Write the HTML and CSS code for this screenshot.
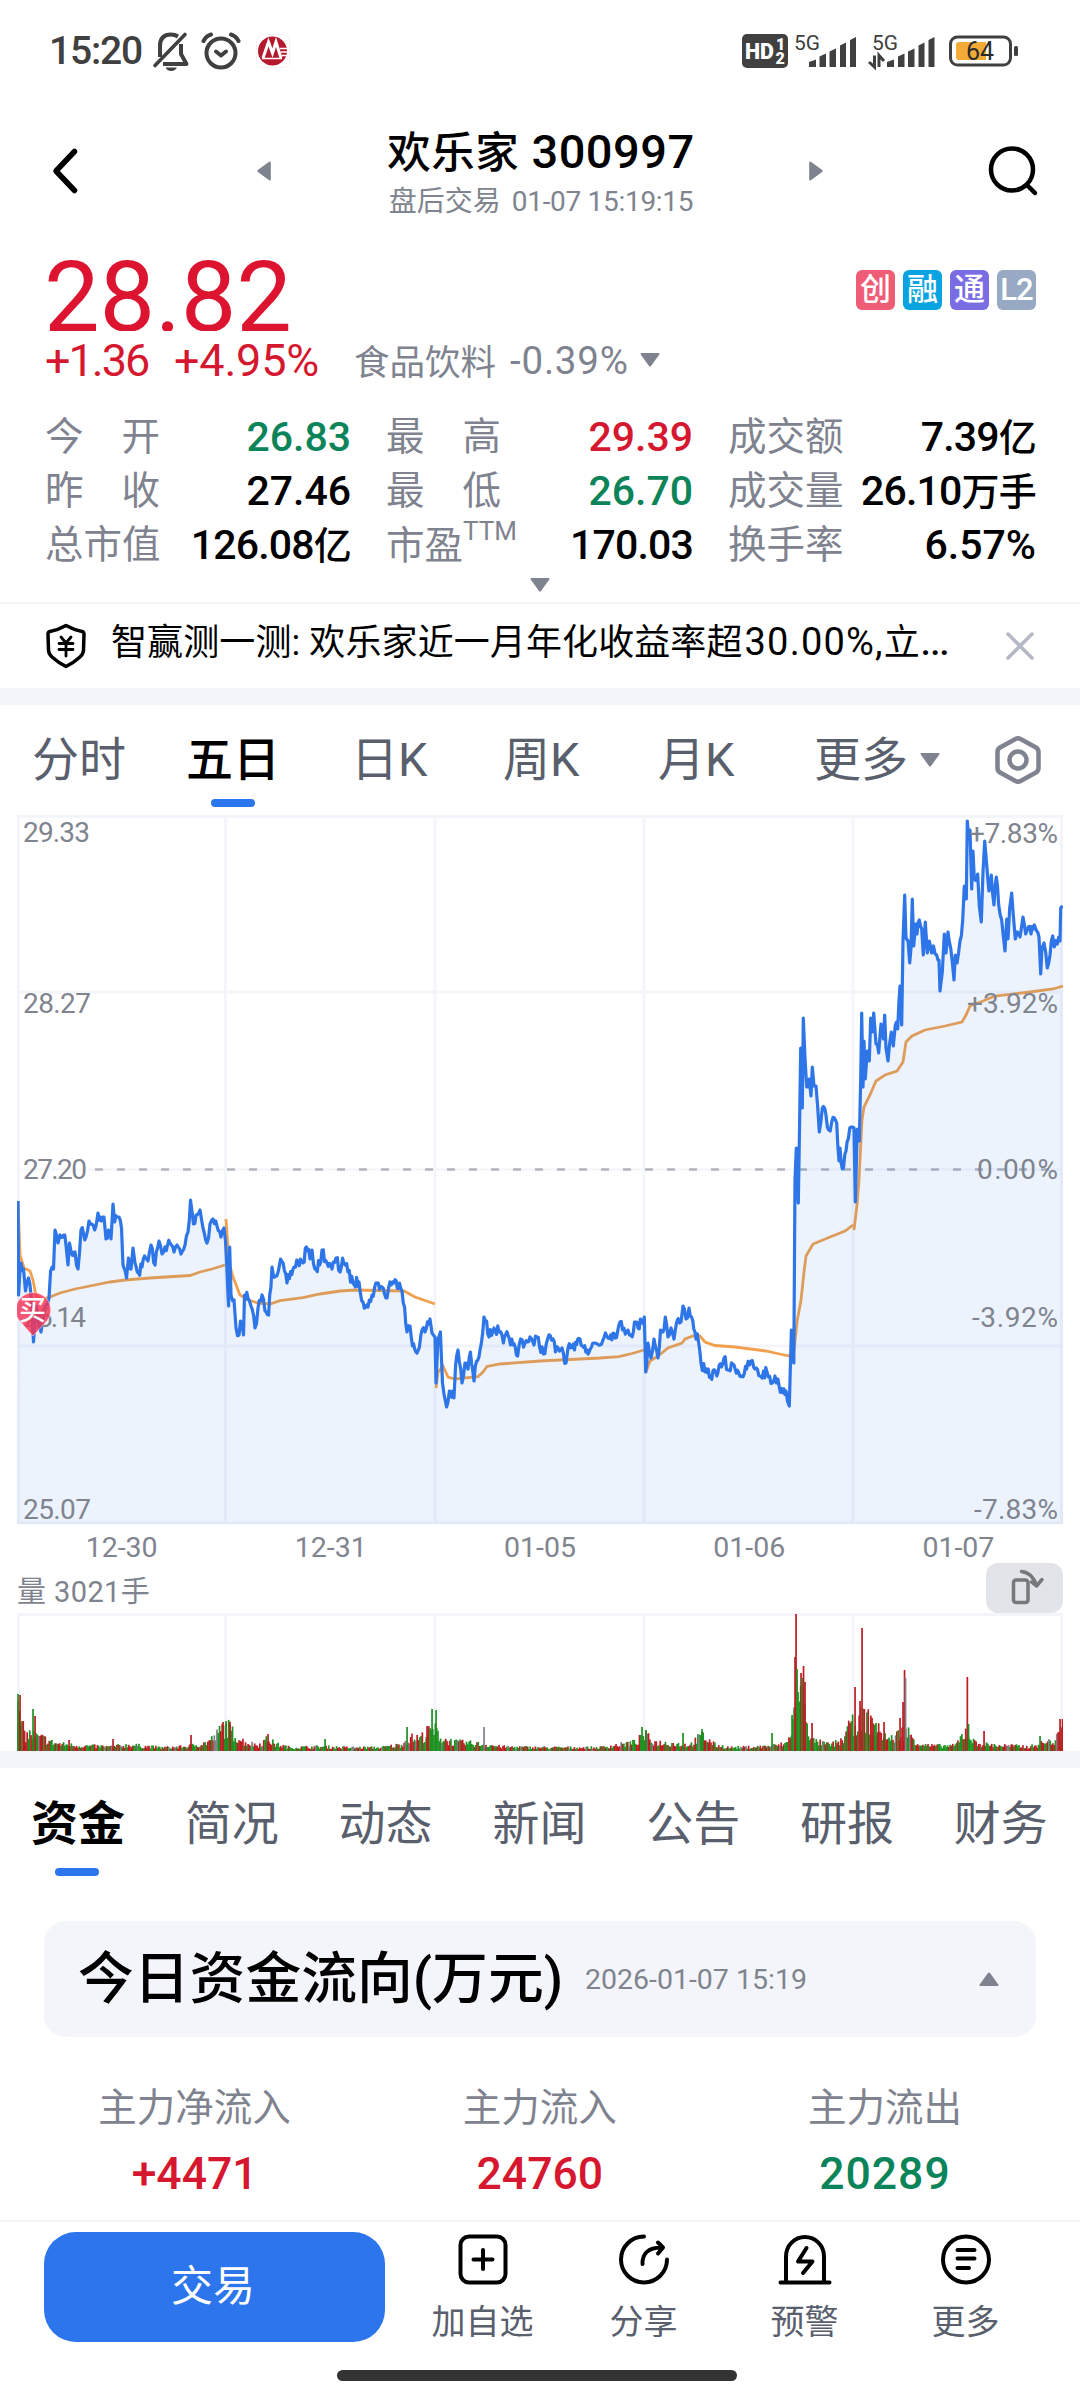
FILE: index.html
```html
<!DOCTYPE html>
<html lang="zh-CN">
<head>
  <meta charset="UTF-8" />
  <meta name="viewport" content="width=device-width, initial-scale=1.0"/>
  <title>欢乐家 300997</title>
  <link rel="stylesheet" href="styles.css">
</head>
<body>

  <!-- Status bar -->
  <div class="status">
    <span class="clock">15:20</span>
    <svg class="st-bell" width="38" height="40" viewBox="0 0 38 40" fill="none" stroke="#404040" stroke-width="4">
      <path d="M8 26 V15 Q8 3.500 19 3.500 Q23 3.500 26 5.500"/>
      <path d="M29 13 V23 L34.500 33 H11" stroke-linejoin="round"/>
      <path d="M3 34.500 L33 3.500" stroke-linecap="round" stroke-width="3.600"/>
      <path d="M13.500 36.500 H25 Q23 40 19 40 Q15.500 40 13.500 36.500Z" fill="#404040" stroke="none"/>
    </svg>
    <svg class="st-alarm" width="40" height="40" viewBox="0 0 40 40" fill="none" stroke="#404040" stroke-width="4" stroke-linecap="round" stroke-linejoin="round">
      <circle cx="20" cy="22" r="14.500"/>
      <path d="M15 20.500 L20 24.500 L25 20.500"/>
      <path d="M2.500 10 Q5 5 10 3.500 M37.500 10 Q35 5 30 3.500"/>
    </svg>
    <svg class="st-bank" width="34" height="34" viewBox="0 0 34 34">
      <rect x="0.500" y="0.500" width="33" height="33" rx="6" fill="#fff" stroke="#f3f1f1"/>
      <circle cx="16.500" cy="17" r="14.500" fill="#b5192e"/>
      <path d="M7 24 L12.500 8 L16.500 19 L20 8 L25 24" fill="none" stroke="#fff" stroke-width="3"/>
      <path d="M6 24.500 H26 M24 14.500 H33 M25 18 H33 M26 21.500 H33" stroke="#fff" stroke-width="1.700"/>
    </svg>

    <div class="st-right">
      <svg width="46" height="34" viewBox="0 0 46 34">
        <rect width="46" height="34" rx="5" fill="#404040"/>
        <text x="3" y="24.500" class="hd" textLength="29" lengthAdjust="spacingAndGlyphs">HD</text>
        <text x="34" y="16" class="hd-sub">1</text>
        <text x="33.500" y="30" class="hd-sub">2</text>
      </svg>
      <svg class="sig" width="64" height="40" viewBox="0 -4 64 40">
        <text x="0" y="14.500" class="g5" textLength="26" lengthAdjust="spacingAndGlyphs">5G</text>
        <path class="bars" d="M15 32V27L22 24.500V32Z M25.500 32V21.500L32 18.500V32Z M35.500 32V16.500L42 13.500V32Z M46 32V10.500L52 7.500V32Z M56 32V5L62 2V32Z"/>
      </svg>
      <svg class="sig two" width="70" height="40" viewBox="0 -4 70 40">
        <text x="4" y="14.500" class="g5" textLength="26" lengthAdjust="spacingAndGlyphs">5G</text>
        <path d="M6.500 20.500 V32 L1 27 M11 32 V20.500 L16 26" fill="none" stroke="#404040" stroke-width="3"/>
        <path class="bars" d="M19 32V27L26 24.500V32Z M30 32V21.500L36.500 18.500V32Z M40 32V16.500L46.500 13.500V32Z M50.500 32V10.500L56.500 7.500V32Z M60.500 32V5L66.500 2V32Z"/>
      </svg>
      <svg class="batt" width="70" height="32" viewBox="0 0 70 32">
        <rect x="1.500" y="2" width="60" height="28" rx="7" fill="none" stroke="#404040" stroke-width="3"/>
        <path d="M10 7 H37 V25 H10 Q7 25 7 22 V10 Q7 7 10 7Z" fill="#f3ab38"/>
        <rect x="65" y="11" width="4" height="10" rx="1.500" fill="#404040"/>
        <text x="31" y="25" class="pct" text-anchor="middle">64</text>
      </svg>
    </div>
  </div>

  <!-- Title -->
  <header class="header">
    <svg class="back" width="30" height="50" viewBox="0 0 30 50" fill="none" stroke="#000" stroke-width="5.500" stroke-linecap="round" stroke-linejoin="round">
      <path d="M24.500 5.500 L6 25 L24.500 44.500"/>
    </svg>
    <svg class="prev" width="14" height="20" viewBox="0 0 14 20"><path d="M12.500 .5 Q13.800 .3 13.800 1.800 V18.200 Q13.800 19.700 12.500 19.500 L.8 11 Q-.2 10 .8 9Z" fill="#7f838f"/></svg>
    <div class="title">
      <h1><span class="cn">欢乐家</span> 300997</h1>
      <p>盘后交易 <span>01-07 15:19:15</span></p>
    </div>
    <svg class="next" width="14" height="20" viewBox="0 0 14 20"><path d="M1.500 .5 Q.2 .3 .2 1.800 V18.200 Q.2 19.700 1.500 19.500 L13.200 11 Q14.200 10 13.200 9Z" fill="#7f838f"/></svg>
    <svg class="search" width="52" height="52" viewBox="0 0 52 52" fill="none" stroke="#000" stroke-width="4.500" stroke-linecap="round">
      <circle cx="25" cy="24.500" r="21"/>
      <path d="M40.500 40.500 L48 48"/>
    </svg>
  </header>

  <!-- Quote -->
  <section class="quote">
    <div class="price-row">
      <div class="price">28.82</div>
      <div class="tags">
        <span class="tag red">创</span><span class="tag blue">融</span><span class="tag purple">通</span><span class="tag grey">L2</span>
      </div>
    </div>
    <div class="change">
      <span class="chg">+1.36</span>
      <span class="pct-chg">+4.95%</span>
      <span class="sector">食品饮料</span>
      <span class="sector-chg">-0.39%</span>
      <svg width="20" height="14" viewBox="0 0 20 14"><path d="M1.500 0 H18.500 Q20 0 19.300 1.500 L11 13 Q10 14 9 13 L.7 1.500 Q0 0 1.500 0Z" fill="#7f838f"/></svg>
    </div>
    <div class="stats">
      <div class="stat"><b class="lb">今<i></i>开</b><span class="down">26.83</span></div>
      <div class="stat"><b class="lb">最<i></i>高</b><span class="up">29.39</span></div>
      <div class="stat"><b class="lb">成交额</b><span class="tight">7.39<em>亿</em></span></div>
      <div class="stat"><b class="lb">昨<i></i>收</b><span>27.46</span></div>
      <div class="stat"><b class="lb">最<i></i>低</b><span class="down">26.70</span></div>
      <div class="stat"><b class="lb">成交量</b><span class="tight">26.10<em>万手</em></span></div>
      <div class="stat"><b class="lb">总市值</b><span class="tight">126.08<em>亿</em></span></div>
      <div class="stat"><b class="lb ttm">市盈<sup>TTM</sup></b><span class="tight">170.03</span></div>
      <div class="stat"><b class="lb">换手率</b><span>6.57%</span></div>
    </div>
    <div class="expand">
      <svg width="20" height="14" viewBox="0 0 20 14"><path d="M1.500 0 H18.500 Q20 0 19.300 1.500 L11 13 Q10 14 9 13 L.7 1.500 Q0 0 1.500 0Z" fill="#7f838f"/></svg>
    </div>
  </section>

  <div class="banner">
    <svg width="40" height="46" viewBox="0 0 40 46" fill="none" stroke="#000" stroke-linejoin="round" stroke-linecap="round">
      <path d="M20 2.500 Q28 7 36 8.500 Q38 9 38 11 L37.500 27 Q37.500 31 34 34 Q28 39.500 20 43.500 Q12 39.500 6 34 Q2.500 31 2.500 27 L2 11 Q2 9 4 8.500 Q12 7 20 2.500Z" stroke-width="3.500"/>
      <path d="M15 14 L20 20 L25 14 M20 20 V33 M13 20.500 H27 M13 26.500 H27" stroke-width="2.800"/>
    </svg>
    <p>智赢测一测: 欢乐家近一月年化收益率超<span class="num">30.00%,</span>立<span class="dots">…</span></p>
    <svg width="28" height="28" viewBox="0 0 28 28" stroke="#b3b8c5" stroke-width="3.500" stroke-linecap="round"><path d="M2 2 L26 26 M26 2 L2 26"/></svg>
  </div>

  <div class="band"></div>

  <nav class="periods">
    <span>分时</span>
    <span class="on">五日</span>
    <span>日K</span>
    <span>周K</span>
    <span>月K</span>
    <span>更多</span>
    <svg class="caret" width="20" height="14" viewBox="0 0 20 14"><path d="M1.500 0 H18.500 Q20 0 19.300 1.500 L11 13 Q10 14 9 13 L.7 1.500 Q0 0 1.500 0Z" fill="#7f838f"/></svg>
    <svg class="gear" width="50" height="52" viewBox="0 0 50 52" fill="none" stroke="#7f838f" stroke-width="4.500" stroke-linejoin="round">
      <path d="M22.500 5 Q25 3.500 27.500 5 L43 13.500 Q45.500 15 45.500 18 V34 Q45.500 37 43 38.500 L27.500 47 Q25 48.500 22.500 47 L7 38.500 Q4.500 37 4.500 34 V18 Q4.500 15 7 13.500Z"/>
      <circle cx="25" cy="26" r="8.500"/>
    </svg>
  </nav>

  <!-- Price chart -->
  <div class="chart">
    <svg id="price" width="1046" height="710" viewBox="17 815 1046 710">
      <g class="grid">
        <path d="M18.500 816.500 H1061.500 V1523 H18.500Z M225.500 816 V1523 M435 816 V1523 M644 816 V1523 M853 816 V1523 M18 992 H1062 M18 1346 H1062"/>
        <path class="thin" d="M18 1169.500 H1062"/>
      </g>
      <path class="zero" d="M95 1169.500 H1056"/>
      <g id="avg"></g>
      <path id="area"/>
      <path id="line"/>
      <g class="axis">
        <text x="23" y="842" textLength="67">29.33</text>
        <text x="23" y="1012.500" textLength="68">28.27</text>
        <text x="23" y="1178.500" textLength="64">27.20</text>
        <text x="23" y="1326.500" textLength="63">26.14</text>
        <text x="23" y="1518.500" textLength="68">25.07</text>
        <text x="969" y="842.500" textLength="89">+7.83%</text>
        <text x="967" y="1012.500" textLength="91">+3.92%</text>
        <text x="977" y="1178.500" textLength="81">0.00%</text>
        <text x="972" y="1326.500" textLength="86">-3.92%</text>
        <text x="974" y="1518.500" textLength="84">-7.83%</text>
      </g>
      <g class="pin">
        <path d="M33 1326 m0 10 Q30 1333 22 1323.500 A17.500 17.500 0 1 1 44.500 1323.500 Q36 1333 33 1336Z"/>
        <text x="32.500" y="1320" text-anchor="middle">买</text>
      </g>
    </svg>
    <div class="dates"><span>12-30</span><span>12-31</span><span>01-05</span><span>01-06</span><span>01-07</span></div>
    <div class="vol-head">
      <span>量 3021手</span>
      <div class="rotate">
        <svg width="36" height="38" viewBox="0 0 36 38" fill="none" stroke="#777879" stroke-width="3.500" stroke-linejoin="round" stroke-linecap="round">
          <rect x="4.500" y="12" width="14.500" height="22.500" rx="2.500"/>
          <path d="M12.500 3.500 Q23 4.500 27.500 17.500 M27.500 18 L33 11.500 M27.500 18 L22.500 14" />
        </svg>
      </div>
    </div>
    <svg id="volume" width="1046" height="138" viewBox="17 1613 1046 138">
      <path class="vgrid" d="M18.500 1751 V1614.500 H1061.500 V1751 M225.500 1614 V1751 M435 1614 V1751 M644 1614 V1751 M853 1614 V1751"/>
      <g id="bars"></g>
    </svg>
  </div>

  <div class="band"></div>

  <nav class="sections">
    <span class="on">资金</span><span>简况</span><span>动态</span><span>新闻</span><span>公告</span><span>研报</span><span>财务</span>
  </nav>

  <div class="flow-card">
    <h2>今日资金流向(万元)</h2>
    <time>2026-01-07 15:19</time>
    <svg width="20" height="14" viewBox="0 0 20 14"><path d="M1.500 14 H18.500 Q20 14 19.300 12.500 L11 1 Q10 0 9 1 L.7 12.500 Q0 14 1.500 14Z" fill="#7f838f"/></svg>
  </div>

  <div class="flows">
    <div><p>主力净流入</p><strong class="up">+4471</strong></div>
    <div><p>主力流入</p><strong class="up">24760</strong></div>
    <div><p>主力流出</p><strong class="down wide">20289</strong></div>
  </div>

  <!-- Bottom bar -->
  <footer class="bottom">
    <div class="actions">
      <button class="trade">交易</button>
      <div class="act">
        <svg width="54" height="54" viewBox="0 0 54 54"><rect x="4.500" y="4.500" width="45" height="46" rx="8.500"/><path d="M27 18 V37 M17.500 27.500 H36.500"/></svg>
        <span>加自选</span>
      </div>
      <div class="act">
        <svg width="54" height="54" viewBox="0 0 54 54"><path d="M27 4.500 A23 23 0 1 0 50 27.500"/><path d="M25.500 32 Q25 16 44 15.500 M41 10.500 L46 15.500 L41 21.500"/></svg>
        <span>分享</span>
      </div>
      <div class="act">
        <svg width="54" height="54" viewBox="0 0 54 54"><path d="M2.500 50.500 H51.500 M8 50 V24.500 A19 19.500 0 0 1 46 24.500 V50"/><path d="M28.500 16 L20 29.500 H34.500 L25 41"/></svg>
        <span>预警</span>
      </div>
      <div class="act">
        <svg width="54" height="54" viewBox="0 0 54 54"><circle cx="27" cy="27.500" r="23"/><path d="M18.500 18 H35.500 M18.500 26.500 H35.500 M18.500 36 H30"/></svg>
        <span>更多</span>
      </div>
    </div>
    <div class="home"></div>
  </footer>

  <script src="chart.js"></script>
</body>
</html>
```
FILE: styles.css
```css
* {
  box-sizing: border-box;
  margin: 0;
  padding: 0;
}

body {
  width: 1080px;
  height: 2400px;
  display: flex;
  flex-direction: column;
  background: #fff;
  color: #000;
  font-family: Roboto, "Noto Sans CJK SC", sans-serif;
  overflow: hidden;
}

svg {
  display: block;
  flex: none;
}

.up { color: #d5182f; }
.down { color: #0c8459; }

/* status bar */
.status {
  height: 102px;
  display: flex;
  align-items: center;
  padding: 0 61px 0 49px;
}

.clock {
  width: 103px;
  font-size: 39px;
  font-weight: 500;
  color: #404040;
  letter-spacing: -1.2px;
}

.st-alarm { margin-left: 11px; }
.st-bank { margin-left: 15px; }

.st-right {
  display: flex;
  align-items: center;
  margin-left: auto;
}

.hd { font-size: 22px; font-weight: 900; fill: #fff; }
.hd-sub { font-size: 16px; font-weight: 900; fill: #fff; }
.g5 { font-size: 21px; fill: #404040; }
.bars { fill: #404040; }
.sig { margin-left: 6px; }
.sig.two { margin-left: 10px; }
.batt { margin-left: 11px; }
.pct { font-size: 25px; fill: #2b2b2b; }

/* header */
.header {
  height: 138px;
  display: flex;
  align-items: center;
  padding: 0 41px 0 50px;
}

.prev { margin-left: 177px; }

.title {
  width: 320px;
  margin: 9px 0 0 110px;
  text-align: center;
}

.title h1 {
  font-size: 47px;
  line-height: 50px;
  font-weight: 500;
  letter-spacing: 0.5px;
  white-space: nowrap;
}

.title .cn { font-size: 43.5px; }

.title p {
  font-size: 28px;
  line-height: 46px;
  color: #80848f;
  white-space: nowrap;
}

.title p span { letter-spacing: -0.3px; margin-left: 4px; }
.next { margin-left: 108px; }
.search { margin-left: auto; }

/* quote */
.quote { height: 362px; padding: 8px 44px 0; }

.price-row {
  height: 83px;
  display: flex;
  justify-content: space-between;
  overflow: hidden;
}

.price {
  font-size: 99px;
  line-height: 99px;
  letter-spacing: -0.2px;
  color: #dd142f;
}

.tags {
  display: flex;
  gap: 8px;
  padding-top: 22px;
}

.tag {
  width: 39px;
  height: 40px;
  border-radius: 6px;
  color: #fff;
  font-size: 31px;
  font-weight: 500;
  line-height: 40px;
  text-align: center;
}

.tag.red { background: #ef5c76; }
.tag.blue { background: #09a3e2; }
.tag.purple { background: #7a6de3; }
.tag.grey { background: #98aac3; letter-spacing: -1px; }

.change {
  height: 58px;
  display: flex;
  align-items: center;
  color: #d5182f;
  font-size: 45px;
  padding-left: 1px;
}

.chg { width: 129px; letter-spacing: -2px; }
.pct-chg { width: 180px; letter-spacing: -0.2px; }
.sector { width: 156px; font-size: 35.5px; margin-top: -2px; color: #7f838f; }
.sector-chg { width: 130px; font-size: 38.5px; letter-spacing: 0.8px; color: #7f838f; }

.stats {
  display: grid;
  grid-template-columns: 306px 307px 308px;
  column-gap: 35px;
  margin-top: 21px;
  padding-left: 1px;
}

.stat {
  height: 54px;
  display: flex;
  align-items: center;
  justify-content: space-between;
  line-height: 54px;
  font-size: 41px;
  font-weight: 500;
  white-space: nowrap;
}

.lb {
  font-size: 38.5px;
  font-weight: 400;
  color: #7f838f;
}

.lb i { display: inline-block; width: 38px; }

.lb sup {
  display: inline-block;
  font-size: 26px;
  line-height: 26px;
  vertical-align: 19px;
}

.stat em { font-size: 38px; font-style: normal; }
.tight { letter-spacing: -0.8px; }

.expand {
  display: flex;
  justify-content: center;
  padding-top: 6px;
}

.banner {
  height: 86px;
  border-top: 2px solid #f5f5f7;
  display: flex;
  align-items: center;
  padding: 0 46px;
}

.banner p {
  flex: 1;
  margin-left: 25px;
  margin-top: -7px;
  font-size: 36px;
  line-height: 60px;
  letter-spacing: 0.1px;
  white-space: nowrap;
}

.banner .num { margin-left: 2px; font-size: 38px; letter-spacing: 1.2px; }
.banner .dots { font-size: 45px; line-height: 40px; }

.band { height: 17px; background: #f4f5fa; flex: none; }

/* period tabs */
.periods {
  height: 110px;
  display: flex;
  align-items: center;
  padding-left: 32px;
  font-size: 47px;
  line-height: 112px;
  color: #5a5f6e;
}

.periods span { width: 154px; position: relative; }
.periods span:nth-child(2) { width: 165px; }
.periods span:nth-child(3) { width: 152px; }
.periods span:nth-child(4) { width: 155px; }
.periods span:nth-child(5) { width: 156px; }
.periods span:nth-child(6) { width: 106px; }
.periods .on, .sections .on { color: #000; font-weight: 500; }

.on::after {
  content: "";
  position: absolute;
  left: 25px;
  bottom: 9px;
  width: 44px;
  height: 8px;
  border-radius: 4px;
  background: #2c75ed;
}

.gear { margin-left: 53px; }

/* charts */
.chart { padding: 0 17px; }

.grid path, .vgrid { fill: none; stroke: #f4f5fa; stroke-width: 3; }
.grid .thin { stroke-width: 2; }
.zero { stroke: #b0b3bb; stroke-width: 2.5; stroke-dasharray: 8 14; }
#avg path { fill: none; stroke: #f0a04e; stroke-width: 2.8; }
#area { fill: #2c75ed; fill-opacity: 0.09; }
#line { fill: none; stroke: #2e75e8; stroke-width: 3.2; stroke-linejoin: round; }
.axis { font-size: 28px; fill: #80848f; }
.pin path { fill: #f53457; fill-opacity: 0.82; stroke: #fff; stroke-opacity: 0.5; }
.pin text { font-size: 27px; font-weight: 500; fill: #fff; }

.dates {
  height: 45px;
  display: flex;
  line-height: 46px;
  font-size: 28.5px;
  color: #80848f;
  text-align: center;
}

.dates span { flex: 1; }

.vol-head {
  height: 43px;
  display: flex;
  align-items: flex-end;
  justify-content: space-between;
  font-size: 29px;
  line-height: 41px;
  letter-spacing: 0.4px;
  color: #7f838f;
}

.rotate {
  width: 77px;
  height: 50px;
  padding: 5px 0 0 23px;
  border-radius: 12px;
  background: #e3e4e9;
}

/* section tabs */
.sections {
  height: 112px;
  display: flex;
  padding-left: 31px;
  font-size: 47px;
  line-height: 112px;
  color: #5a5f6e;
}

.sections span { width: 153.8px; flex: none; position: relative; }
.sections .on { font-weight: 700; }
.sections .on::after { left: 24px; bottom: 4px; }

.flow-card {
  height: 116px;
  margin: 41px 44px 0;
  padding: 0 37px 0 34px;
  border-radius: 22px;
  background: #f4f5fa;
  display: flex;
  align-items: center;
}

.flow-card h2 { width: 507px; font-size: 55.8px; font-weight: 500; line-height: 112px; white-space: nowrap; }
.flow-card time { flex: 1; font-size: 28.5px; color: #80848f; }

.flows {
  display: flex;
  padding: 45px 22px 0;
  text-align: center;
}

.flows div { width: 345.2px; }
.flows p { font-size: 38.5px; line-height: 52px; color: #7f838f; }
.flows strong { display: block; margin-top: 15px; font-size: 44.5px; line-height: 50px; font-weight: 500; }
.flows .wide { letter-spacing: 1px; }

/* bottom bar */
.bottom {
  height: 180px;
  margin-top: auto;
  border-top: 2px solid #f4f4f6;
}

.actions {
  height: 122px;
  display: flex;
  padding: 10px 34px 0 44px;
}

.trade {
  width: 341px;
  height: 110px;
  margin-right: 17px;
  padding-right: 3px;
  border: 0;
  border-radius: 32px;
  background: #2c75ed;
  color: #fff;
  font: 400 42px/106px Roboto, "Noto Sans CJK SC", sans-serif;
}

.act {
  width: 161px;
  display: flex;
  flex-direction: column;
  align-items: center;
  font-size: 34px;
  line-height: 48px;
  color: #5a5f6e;
}

.act svg { fill: none; stroke: #000; stroke-width: 4; stroke-linecap: round; stroke-linejoin: round; }
.act span { margin-top: 12px; }

.home {
  width: 400px;
  height: 11px;
  margin: 26px 343px 0 337px;
  border-radius: 6px;
  background: #333;
}
```
FILE: chart.js
```js
const NS = 'http://www.w3.org/2000/svg';

// small fixed-seed generator, keeps the wiggle the same on every load
let seed = 7;
function rnd() {
  seed = (seed * 16807) % 2147483647;
  return seed / 2147483647;
}

const price = `18,1201 18.6,1295 21,1263 23.5,1269 25.5,1291 28.5,1278 31,1295 33.5,1342 36,1306 41,1332 45,1306 49,1298
50.6,1271 53.5,1269 55,1230 58,1243 60,1235 63.7,1235 66,1245 68,1265 69.5,1243 71.6,1254 75,1252 78,1269 81,1230
86,1237 89,1221 92,1224 96,1226 98,1213 101.5,1221 104,1217 106,1239 108.5,1230 111,1239 113,1204 114.7,1222 117,1217
119,1217 121.5,1228 123,1265 126.5,1278 128.5,1258 131,1269 133,1248 135,1263 138.5,1273 142,1267 144.6,1256 148,1261
151,1245 155,1265 159,1241 162,1254 165,1247 170,1243 174,1252 177,1245 181,1254 185,1245 188,1232 190.5,1200
193.5,1224 196,1215 200,1210 203,1228 207,1243 210,1224 213,1219 217,1226 221,1237 224,1228 225.5,1241 228,1295
228.6,1306 229.7,1247 231,1295 234,1300 236,1328 239,1335 240.5,1321 243.5,1335 244.5,1295 248,1298 251,1306
255,1328 258,1308 262,1295 265,1311 268.6,1315 272,1267 275.5,1276 280.6,1259 287,1283 293,1269 298,1261 303,1263
306.5,1247 310,1259 312,1250 315,1269 319.6,1265 322,1250 327,1263 332,1269 336,1258 340,1272 342.6,1258 348,1272
353,1283 359,1282 363,1302 368,1307 372,1295 377,1283 382,1287 387,1298 390,1282 394,1283 399.5,1283 402,1291
404.6,1307 407,1332 410,1326 412.5,1346 417,1353 422,1330 425,1332 430,1319 432,1333 435,1337 436,1383 438,1339
440.4,1332 442.5,1383 444,1394 446.6,1407 449.4,1391 454,1398 455.6,1365 458,1350 462,1383 465,1363 468,1369
470.4,1352 474,1381 476.6,1361 480,1350 484,1317 486.6,1321 489,1337 494,1328 499,1332 503.4,1343 508,1335 513,1345
517.6,1356 520.7,1339 525,1343 530,1337 534,1345 537,1337 543.4,1354 547.6,1339 553,1339 555.5,1352 562,1348
566,1363 568,1348 574.4,1350 580,1339 587,1350 595,1343 600,1345 605.4,1333 610.6,1335 617.5,1332 620,1322
622.6,1330 628,1330 631,1335 635.7,1322 638,1328 641.6,1321 644.3,1317 645.7,1372 648,1343 651,1358 654,1339
658,1358 660.5,1330 663,1332 665.3,1317 668,1337 671,1328 674,1339 676.7,1322 681,1322 683,1306 686,1319 689,1308
691.5,1317 695,1332 698.4,1341 701,1363 705,1372 710.5,1376 715.6,1372 721.5,1367 724,1358 727.7,1370 734,1365
742,1376 746.6,1369 751,1361 755,1369 760,1376 767,1372 772.4,1383 775,1376 779.3,1387 786,1391 789.3,1406
791.4,1330 793.8,1363 795,1180 796.3,1148 798.3,1203 800.7,1048 802.3,1108 803.3,1018 805,1058 806.7,1087
809.3,1079 811,1096 812.3,1067 814,1086 816,1086 819.3,1132 822.3,1108 826,1115 828.7,1130 831.7,1122 836.7,1123
839,1161 840,1148 842.3,1169 846,1151 848.3,1139 851.3,1127 854,1128 855.3,1202 857.3,1129 859.3,1141 860.7,1079
861.7,1013 863,1087 864,1041 865.3,1079 867.3,1051 869.3,1061 870.7,1018 872.3,1032 873.7,1013 876,1044 878.7,1053
881,1024 883.3,1039 884.7,1015 886,1048 888,1061 891.3,1032 893.3,1046 895.3,1025 897.7,1029 900,986 901.7,1025
903,941 904.7,895 906,938 908,941 909.7,963 911,948 912.3,899 913.7,946 915.7,924 917,934 919.3,920 921.7,929
923.3,955 925.3,922 927.3,953 929.3,941 931.7,953 933.5,946 936.7,955 939,960 940,991 942.3,972 944.3,934 946,953
948,932 950.7,948 954,980 955.3,955 957,963 960,941 962.7,920 964.3,886 966.3,899 967.3,821 968.7,838 970,830
971.7,889 973,851 974.3,879 977.7,874 979.3,906 981.3,922 983,872 984.7,841 986.7,865 989,891 991.3,875 994,905
996.3,877 998.7,905 1001.7,920 1005,951 1006.7,919 1008,939 1009.7,908 1011.7,893 1013.3,915 1015.3,939
1017.3,932 1020,937 1023,917 1025.7,934 1028.3,927 1031,934 1033.3,929 1036.7,931 1039,937 1040.7,974 1042,948
1044,943 1047.3,968 1050,955 1052.7,936 1054.3,947 1057.3,944 1060,941 1060.7,908 1062.7,906`;

const average = [
  '18,1201 20,1255 24,1268 30,1271 33,1280 36,1296 42,1299 50,1297 60,1293 75,1289 90,1286 110,1282 125,1280 150,1278 190,1275.5 200,1272 212,1269 225,1265',
  '226,1219 229,1262 233,1277 240,1295 248,1300 258,1303 270,1304 280,1300.7 303,1297.6 320,1294 340,1291 355,1290 404,1291 415,1297 435,1304',
  '436,1388 438,1372 443,1366 448,1377 455,1379 478,1376.6 483,1372 487,1366.5 500,1364 540,1361 600,1358 619,1356.6 632,1353.5 644,1350',
  '646,1372 650,1361 658,1356 668,1348 682,1343 685,1339 693,1336 700,1336 705,1342 715,1345.5 735,1347 766,1351 775,1353 789,1356 794,1350 797,1322 801,1300 804,1272 806,1256 813,1244 830,1237 845,1231 853,1225',
  '854,1230 857,1205 859,1180 862,1120 864,1107 870,1095 876,1081 885,1075 897,1071 903,1062 906,1042 912,1036 925,1030 945,1026 962,1022 966,1015 970,1006 983,1001 995,996 1030,992 1053,989 1063,986'
];

function parse(s) {
  return s.trim().split(/\s+/).map(p => p.split(',').map(Number));
}

function ticks(pts) {
  const out = [];
  for (let i = 0; i < pts.length - 1; i++) {
    const [x0, y0] = pts[i];
    const [x1, y1] = pts[i + 1];
    out.push([x0, y0]);
    const n = Math.floor((x1 - x0) / 1.1);
    for (let k = 1; k < n; k++) {
      const t = k / n;
      out.push([x0 + (x1 - x0) * t, y0 + (y1 - y0) * t + (rnd() - 0.5) * 11]);
    }
  }
  out.push(pts[pts.length - 1]);
  return out;
}

const line = 'M' + ticks(parse(price)).map(p => p[0].toFixed(1) + ' ' + p[1].toFixed(1)).join('L');
document.getElementById('line').setAttribute('d', line);
document.getElementById('area').setAttribute('d', line + 'L1063 1524L17 1524Z');

average.forEach(s => {
  const p = document.createElementNS(NS, 'path');
  p.setAttribute('d', 'M' + parse(s).map(a => a.join(' ')).join('L'));
  document.getElementById('avg').appendChild(p);
});

// usual volume level along the axis
const level = parse(`18,45 22,28 26,18 31,20 37,16 45,14 52,10 60,8 80,6 110,5 130,7 160,4 185,5 205,9 215,16 222,26 228,28
235,18 245,10 258,7 268,14 275,8 290,4 320,5 345,4 380,4 400,7 410,15 420,15 430,22 436,24 442,14 455,10 470,9 490,7
500,5 540,4 600,4 618,7 635,10 645,18 655,10 670,9 690,7 702,18 715,7 730,4 760,5 780,7 788,10 793,35 797,60 805,60
808,28 812,12 830,7 842,12 850,28 856,34 865,40 876,26 890,13 902,22 908,22 918,9 930,6 955,6 966,24 975,9 990,7
1010,6 1030,5 1045,10 1055,12 1063,24`);

const RED = '#bb1d22', GREEN = '#1f9122', GREY = '#83808a';

// single large trades
const spikes = [
  [18, 57, GREEN], [20, 56, RED], [33, 42, GREEN], [35, 35, RED], [69, 11, RED], [113, 12, RED], [191, 16, RED],
  [223, 29, RED], [226, 30, GREEN], [230, 27, RED], [268, 17, RED], [325, 12, GREEN], [407, 24, GREEN], [427, 25, RED],
  [432, 42, GREEN], [436, 41, GREEN], [484, 24, GREY], [642, 24, GREEN], [646, 21, GREEN], [683, 18, GREEN],
  [702, 22, GREEN], [772, 18, GREEN], [792, 36, GREEN], [795, 94, RED], [796, 137, RED], [797, 82, GREEN],
  [801, 78, RED], [802, 73, GREEN], [803.5, 85, RED], [805, 69, RED], [812, 28, RED], [850, 28, RED], [855, 64, RED],
  [860, 50, RED], [862, 123, RED], [872, 33, RED], [876, 28, GREEN], [884, 29, RED], [900, 33, RED], [903, 49, RED],
  [904.5, 81, RED], [905.5, 73, GREY], [967.3, 74, RED], [968.5, 27, GREEN], [984, 20, RED], [1040, 15, GREEN],
  [1060, 32, RED], [1062.5, 32, RED]
];

function levelAt(x) {
  let i = 0;
  while (i < level.length - 2 && level[i + 1][0] < x) i++;
  const [x0, y0] = level[i];
  const [x1, y1] = level[i + 1];
  return y0 + (y1 - y0) * Math.min(1, Math.max(0, (x - x0) / (x1 - x0)));
}

function bar(x, h, color) {
  const r = document.createElementNS(NS, 'rect');
  r.setAttribute('x', (x - 0.8).toFixed(1));
  r.setAttribute('y', (1751 - h).toFixed(1));
  r.setAttribute('width', 1.7);
  r.setAttribute('height', h.toFixed(1));
  r.setAttribute('fill', color);
  document.getElementById('bars').appendChild(r);
}

for (let x = 18; x < 1063; x += 1.3) {
  const c = rnd();
  bar(x, Math.max(2, levelAt(x) * (0.45 + rnd() * 0.75)), c < 0.47 ? RED : c < 0.93 ? GREEN : GREY);
}
spikes.forEach(s => bar(...s));
```
